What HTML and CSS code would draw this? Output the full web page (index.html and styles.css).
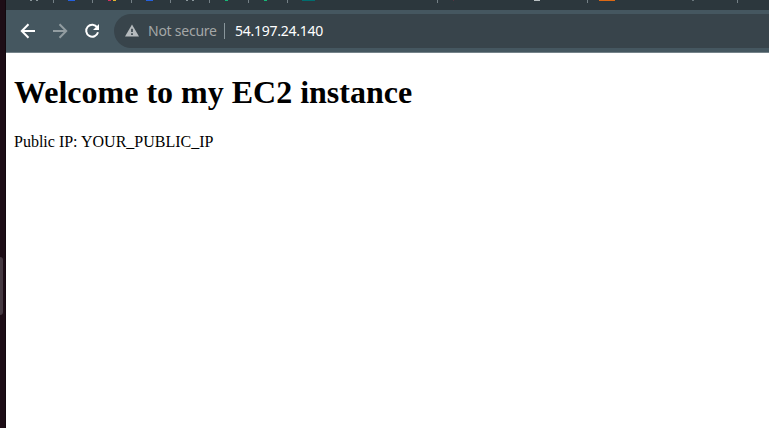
FILE: index.html
```
<!DOCTYPE html>
<html lang="en">
<head>
<meta charset="utf-8">
<title>Welcome</title>
<link rel="stylesheet" href="styles.css">
</head>
<body>
<aside class="dock"><span class="dock-handle"></span></aside>
<main class="window">
  <div class="tabs">
    <div class="tab"><svg class="favicon" viewBox="0 0 39 1"><path fill="#89959a" d="M15 0h2v1h-2zM21 0h2v1h-2z"/></svg></div>
    <div class="tab"><svg class="favicon" viewBox="0 0 39 1"><path fill="#2460df" d="M14 0h7v1h-7z"/></svg></div>
    <div class="tab"><svg class="favicon" viewBox="0 0 39 1"><path fill="#d92e60" d="M15 0h3v1h-3z"/><path fill="#e4b42d" d="M20 0h3v1h-3z"/></svg></div>
    <div class="tab"><svg class="favicon" viewBox="0 0 39 1"><path fill="#2460df" d="M14 0h7v1h-7z"/></svg></div>
    <div class="tab"><svg class="favicon" viewBox="0 0 39 1"><path fill="#89959a" d="M15 0h2v1h-2zM21 0h2v1h-2z"/></svg></div>
    <div class="tab"><svg class="favicon" viewBox="0 0 39 1"><path fill="#16b978" d="M15 0h3v1h-3z"/></svg></div>
    <div class="tab"><svg class="favicon" viewBox="0 0 39 1"><path fill="#16b978" d="M15 0h3v1h-3z"/></svg></div>
    <div class="tab wide"><svg class="favicon" viewBox="0 0 150 1"><path fill="#006d6f" d="M14 0h13v1h-13z"/></svg></div>
    <div class="tab wide"><svg class="favicon" viewBox="0 0 150 1"><path fill="#55333f" d="M15 0h1v1h-1z"/><path fill="#b9c0c2" d="M96 0h6v1h-6z"/></svg></div>
    <div class="tab wide"><svg class="favicon" viewBox="0 0 150 1"><path fill="#dc6814" d="M11 0h16v1h-16z"/><path fill="#69757b" d="M104 0h2v1h-2z"/></svg></div>
  </div>
  <div class="toolbar">
    <svg class="nav" viewBox="0 0 16 16"><path d="M15 8H2M8.5 1.3 1.8 8l6.7 6.7"/></svg>
    <svg class="nav forward" viewBox="0 0 16 16"><path d="M1 8h13M7.5 1.3 14.2 8l-6.7 6.7"/></svg>
    <svg class="nav" viewBox="0 0 16 16"><path d="M13.2 4.4A6 6 0 1 0 14 9.3"/><path class="solid" d="M15 1v6H9z"/></svg>
    <div class="address">
      <svg class="warning" viewBox="0 0 15 13"><path fill="#b5babd" d="M7.5 0 15 13H0z"/><path fill="#38444b" d="M6.6 4.5h1.8V8H6.6zM6.6 9.4h1.8v1.8H6.6z"/></svg>
      <span class="security">Not secure</span>
      <span class="divider"></span>
      <span class="url">54.197.24.140</span>
    </div>
  </div>
  <div class="page">
    <h1>Welcome to my EC2 instance</h1>
    <p>Public IP: YOUR_PUBLIC_IP</p>
  </div>
</main>
</body>
</html>
```
FILE: styles.css
```
* { box-sizing: border-box; }
body {
  margin: 0;
  height: 428px;
  display: flex;
  overflow: hidden;
  background: #fff;
}
.dock {
  flex: 0 0 6px;
  display: flex;
  align-items: flex-start;
  background: #1d0d16;
  border-right: 1px solid #12080e;
}
.dock-handle {
  width: 3px;
  height: 58px;
  margin-top: 257px;
  background: #453941;
  border-radius: 0 3px 3px 0;
}
.window { flex: 1; min-width: 0; }
.tabs {
  display: flex;
  height: 10px;
  padding-left: 9px;
  background: #2c373d;
}
.tab {
  flex: 0 0 39px;
  min-width: 0;
  height: 3px;
  border-right: 1px solid #748086;
}
.tab.wide { flex-basis: 150px; }
.favicon { display: block; width: 39px; height: 1px; }
.wide .favicon { width: 150px; }
.toolbar {
  display: flex;
  align-items: center;
  gap: 16px;
  height: 43px;
  padding: 0 0 1px 14px;
  background: #455760;
  border-bottom: 1px solid #75838a;
}
.nav {
  flex: none;
  width: 16px;
  height: 16px;
  fill: none;
  stroke: #fff;
  stroke-width: 2;
}
.nav .solid { fill: #fff; stroke: none; }
.forward { stroke: #929da1; }
.address {
  flex: 1;
  display: flex;
  align-items: center;
  height: 34px;
  margin-left: -2px;
  padding-left: 11px;
  background: #38444b;
  border-radius: 17px 0 0 17px;
  font: 14px/20px "Noto Sans", sans-serif;
  white-space: nowrap;
}
.warning { width: 14px; height: 13px; margin-right: 9px; }
.security { width: 76px; color: #a4a7a7; letter-spacing: -0.25px; }
.divider { width: 1px; height: 16px; margin-right: 10px; background: #89969b; }
.url { color: #fff; letter-spacing: -0.25px; }
.page {
  display: flow-root;
  padding: 0 8px;
  color: #000;
  font: 16px "Liberation Serif", serif;
}
h1 { margin: 21.44px 0; font-size: 32px; }
p { margin: 0; }
```
